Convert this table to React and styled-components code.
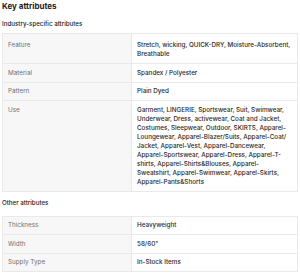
import styled, { createGlobalStyle } from "styled-components";

const Global = createGlobalStyle`
  html, body {
    margin: 0;
    padding: 0;
    background: #fff;
  }
  body {
    font-family: Inter, "Liberation Sans", sans-serif;
    -webkit-font-smoothing: antialiased;
  }
`;

const Page = styled.div`
  width: 300px;
  padding: 1px 2px 0 2px;
  box-sizing: border-box;
`;

const Title = styled.div`
  font-size: 8px;
  line-height: 10px;
  font-weight: 700;
  color: #222;
`;

const Subtitle = styled.div`
  font-size: 6.2px;
  line-height: 8px;
  font-weight: 500;
  color: #222;
  margin-top: ${(props) => props.$top}px;
`;

const Table = styled.div`
  margin-top: ${(props) => props.$top}px;
  border: 1px solid #e9e9e9;
  border-bottom: none;
`;

const Row = styled.div`
  display: grid;
  grid-template-columns: 129px 1fr;
  border-bottom: 1px solid #e9e9e9;
`;

const Label = styled.div`
  background: #f7f7f7;
  border-right: 1px solid #e9e9e9;
  color: #707070;
  font-size: 6.3px;
  line-height: 9px;
  padding: ${(props) => (props.$tall ? "7px" : "4.25px")} 5px 4.25px 5px;
`;

const Value = styled.div`
  color: #2a2a2a;
  font-size: 6.3px;
  line-height: 9px;
  font-weight: 500;
  padding: ${(props) => (props.$tall ? "7px" : "4.25px")} 5px 4.25px 5px;
`;

const industry = [
  ["Feature", "Stretch, wicking, QUICK-DRY, Moisture-Absorbent, Breathable"],
  ["Material", "Spandex / Polyester"],
  ["Pattern", "Plain Dyed"],
  [
    "Use",
    "Garment, LINGERIE, Sportswear, Suit, Swimwear, Underwear, Dress, activewear, Coat and Jacket, Costumes, Sleepwear, Outdoor, SKIRTS, Apparel-Loungewear, Apparel-Blazer/Suits, Apparel-Coat/\u200BJacket, Apparel-Vest, Apparel-Dancewear, Apparel-Sportswear, Apparel-Dress, Apparel-T-shirts, Apparel-Shirts&Blouses, Apparel-Sweatshirt, Apparel-Swimwear, Apparel-Skirts, Apparel-Pants&Shorts",
  ],
];

const other = [
  ["Thickness", "Heavyweight"],
  ["Width", "58/60\""],
  ["Supply Type", "In-Stock Items"],
];

const AttrTable = ({ rows, top, tallFirst }) => (
  <Table $top={top}>
    {rows.map(([k, v], i) => (
      <Row key={k}>
        <Label $tall={tallFirst && i === 0}>{k}</Label>
        <Value $tall={tallFirst && i === 0}>{v}</Value>
      </Row>
    ))}
  </Table>
);

export default function App() {
  return (
    <Page>
      <Global />
      <Title>Key attributes</Title>
      <Subtitle $top={9}>Industry-specific attributes</Subtitle>
      <AttrTable rows={industry} top={5} tallFirst />
      <Subtitle $top={7.5}>Other attributes</Subtitle>
      <AttrTable rows={other} top={8.5} />
    </Page>
  );
}
